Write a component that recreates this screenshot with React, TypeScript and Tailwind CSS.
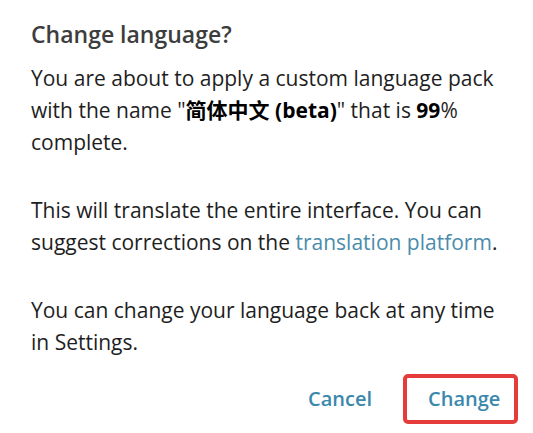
import React from 'react';

const ChangeLanguageDialog = () => {
    return (
        <div className="w-[533px] h-[433px] bg-white font-['Open_Sans','Noto_Sans_CJK_SC',sans-serif] pl-[31px] pr-[15px] pt-[20px]">
            <h2 className="text-[23px] leading-[28px] font-semibold text-[#3d3d3d]">Change language?</h2>

            <div className="w-[482px] text-[21px] leading-[32px] text-[#1e1e1e]">
                <p className="mt-[14px]">
                    You are about to apply a custom language pack with the name "
                    <span className="font-bold text-black">简体中文 (beta)</span>
                    " that is <span className="font-bold text-black">99</span>% complete.
                </p>

                <p className="mt-[36px]">
                    This will translate the entire interface. You can suggest corrections on the{' '}
                    <span className="text-[#4b8cab]">translation platform</span>.
                </p>

                <p className="mt-[36px]">
                    You can change your language back at any time in Settings.
                </p>
            </div>

            <div className="mt-[16px] flex justify-end items-center gap-[31px]">
                <button className="text-[20px] leading-[28px] font-semibold text-[#3b88ad]">Cancel</button>
                <div className="w-[115px] h-[50px] border-[4px] border-[#e63b3b] rounded-[5px] flex items-center pl-[21px]">
                    <button className="text-[20px] leading-[28px] font-semibold text-[#3b88ad]">Change</button>
                </div>
            </div>
        </div>
    );
};

export default function App() {
    return <ChangeLanguageDialog />;
}
